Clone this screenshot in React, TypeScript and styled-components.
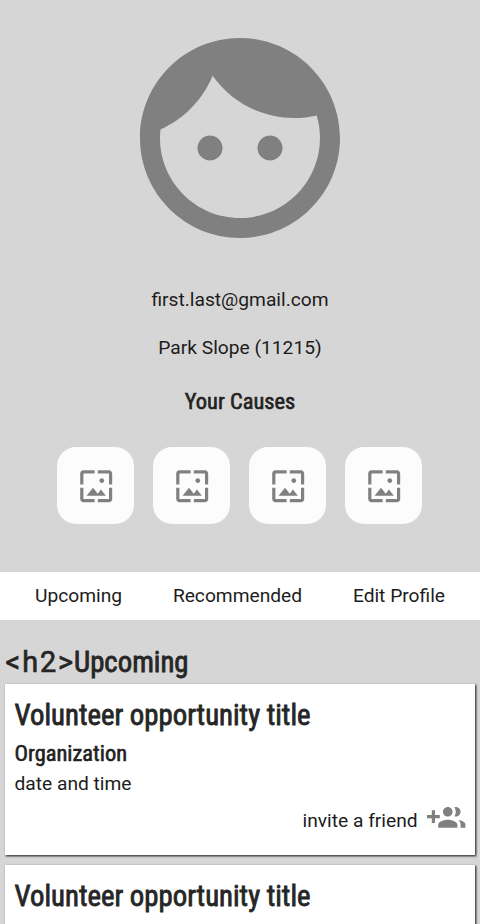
import React from "react";
import styled, { createGlobalStyle } from "styled-components";

const Global = createGlobalStyle`
  * { box-sizing: border-box; }
  html, body { margin: 0; background: #d6d6d6; }
  body { height: 924px; overflow: hidden; font-family: Roboto, sans-serif; font-size: 19.2px; line-height: 24px; color: #1c1c1c; }
  h2, h3, p { margin: 0; }
`;

const Profile = styled.section`
  height: 572px;
  padding-top: 17.5px;
  display: flex;
  flex-direction: column;
  align-items: center;
`;

const Icon = styled.svg<{ $size: number }>`
  display: block;
  flex: none;
  width: ${(p) => p.$size}px;
  height: ${(p) => p.$size}px;
  fill: #808080;
`;

const Email = styled.p`
  margin-top: 30px;
`;

const Place = styled.p`
  margin-top: 24px;
`;

const H3 = styled.h3`
  font-family: "Roboto Condensed", Roboto, sans-serif;
  font-stretch: 75%;
  font-size: 22.46px;
  line-height: 28px;
  font-weight: 400;
  -webkit-text-stroke: 0.6px currentColor;
  color: #212121;
`;

const H2 = styled.h2`
  font-family: "Roboto Condensed", Roboto, sans-serif;
  font-stretch: 75%;
  font-size: 28.8px;
  line-height: 34px;
  font-weight: 400;
  -webkit-text-stroke: 0.8px currentColor;
  color: #262626;
`;

const CausesTitle = styled(H3)`
  margin-top: 27.5px;
`;

const Causes = styled.div`
  display: flex;
  gap: 19px;
  margin: 32px 1px 0 0;
`;

const Cause = styled.div`
  width: 77px;
  height: 77px;
  border-radius: 19.2px;
  background: #fcfcfc;
  display: flex;
  align-items: center;
  justify-content: center;
  padding: 1px 0 0 1px;
`;

const Nav = styled.nav`
  height: 48px;
  background: #fff;
  display: flex;
  align-items: center;
  justify-content: space-between;
  padding: 0 35px;
`;

const Heading = styled.div`
  display: flex;
  align-items: baseline;
  height: 64px;
  padding: 25px 5px 0;
`;

const Tag = styled.span`
  width: 69px;
  padding-left: 0.6px;
  font-size: 28.8px;
  line-height: 34px;
  letter-spacing: 1.9px;
  -webkit-text-stroke: 0.7px currentColor;
  color: #262626;
`;

const Card = styled.article`
  height: 171px;
  margin: 0 5px 10px;
  padding: 14px 9.5px 0;
  background: #fff;
  box-shadow: 1px 1px 1px 1px rgba(0, 0, 0, 0.1), 1px 1px 2px rgba(0, 0, 0, 0.8);
`;

const Organization = styled(H3)`
  margin-top: 7px;
`;

const DateTime = styled.p`
  margin-top: 5px;
`;

const Invite = styled.div`
  display: flex;
  justify-content: flex-end;
  align-items: center;
  gap: 9.5px;
  height: 38.4px;
  margin-top: 3px;
`;

const InviteLabel = styled.span`
  padding-top: 5px;
`;

const WALLPAPER =
  "M4 4h7V2H4c-1.1 0-2 .9-2 2v7h2V4zm6 9l-4 5h12l-3-4-2.03 2.71L10 13zm7-4.5c0-.83-.67-1.5-1.5-1.5S14 7.67 14 8.5s.67 1.5 1.5 1.5S17 9.33 17 8.5zM20 2h-7v2h7v7h2V4c0-1.1-.9-2-2-2zm0 18h-7v2h7c1.1 0 2-.9 2-2v-7h-2v7zM4 13H2v7c0 1.1.9 2 2 2h7v-2H4v-7z";
const FACE =
  "M9 11.75a1.25 1.25 0 1 0 0 2.5 1.25 1.25 0 0 0 0-2.5zm6 0a1.25 1.25 0 1 0 0 2.5 1.25 1.25 0 0 0 0-2.5zM12 2C6.48 2 2 6.48 2 12s4.48 10 10 10 10-4.48 10-10S17.52 2 12 2zm0 18c-4.41 0-8-3.59-8-8 0-.29.02-.58.05-.86 2.36-1.05 4.23-2.98 5.21-5.37C11.07 8.33 14.05 10 17.42 10c.78 0 1.53-.09 2.25-.26.21.71.33 1.47.33 2.26 0 4.41-3.59 8-8 8z";
const GROUP_ADD =
  "M8 10H5V7H3v3H0v2h3v3h2v-3h3v-2zm10 1c1.66 0 2.99-1.34 2.99-3S19.66 5 18 5c-.32 0-.63.05-.91.14.57.81.9 1.79.9 2.86s-.34 2.04-.9 2.86c.28.09.59.14.91.14zm-5 0c1.66 0 2.99-1.34 2.99-3S14.66 5 13 5c-1.66 0-3 1.34-3 3s1.34 3 3 3zm6.62 2.16c.83.73 1.38 1.66 1.38 2.84v2h3v-2c0-1.54-2.37-2.49-4.38-2.84zM13 13c-2 0-6 1-6 3v2h12v-2c0-2-4-3-6-3z";

const Glyph = ({ d, size }: { d: string; size: number }) => (
  <Icon $size={size} viewBox="0 0 24 24">
    <path d={d} />
  </Icon>
);

const Opportunity = () => (
  <Card>
    <H2>Volunteer opportunity title</H2>
    <Organization>Organization</Organization>
    <DateTime>date and time</DateTime>
    <Invite>
      <InviteLabel>invite a friend</InviteLabel>
      <Glyph d={GROUP_ADD} size={38.4} />
    </Invite>
  </Card>
);

export default function App() {
  return (
    <>
      <Global />
      <Profile>
        <Glyph d={FACE} size={240} />
        <Email>first.last@gmail.com</Email>
        <Place>Park Slope (11215)</Place>
        <CausesTitle>Your Causes</CausesTitle>
        <Causes>
          {[0, 1, 2, 3].map((i) => (
            <Cause key={i}>
              <Glyph d={WALLPAPER} size={38.4} />
            </Cause>
          ))}
        </Causes>
      </Profile>
      <Nav>
        <span>Upcoming</span>
        <span>Recommended</span>
        <span>Edit Profile</span>
      </Nav>
      <Heading>
        <Tag>&lt;h2&gt;</Tag>
        <H2>Upcoming</H2>
      </Heading>
      <Opportunity />
      <Opportunity />
    </>
  );
}
